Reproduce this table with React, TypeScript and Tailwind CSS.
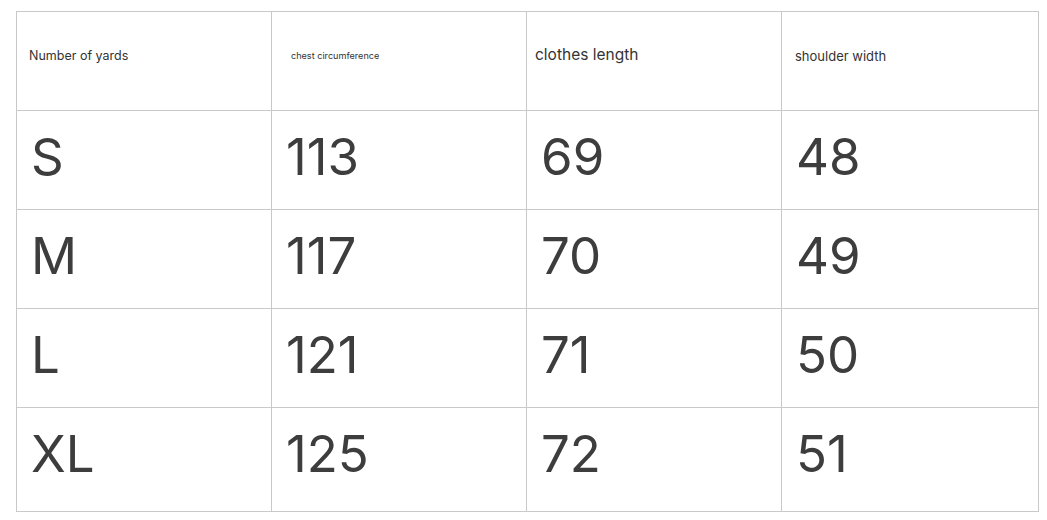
import React from "react";

const rows = [
  ["S", "113", "69", "48"],
  ["M", "117", "70", "49"],
  ["L", "121", "71", "50"],
  ["XL", "125", "72", "51"],
];

export default function App() {
  return (
    <div className="w-[1047px] h-[520px] bg-white pl-[16px] pt-[11px]">
      <div className="grid grid-cols-[255px_255px_255px_257px] grid-rows-[99px_99px_99px_99px_104px] w-[1023px] border-l border-t border-[#c9c9c9]">
        <div className="border-r border-b border-[#c9c9c9] flex items-center pl-[12px] pb-[10px] text-[12.5px] text-[#333] [font-family:Inter,'Noto_Sans',sans-serif]">
          Number of yards
        </div>
        <div className="border-r border-b border-[#c9c9c9] flex items-center pl-[19px] pb-[10px] text-[9.1px] text-[#333] [font-family:Inter,'Noto_Sans',sans-serif]">
          chest circumference
        </div>
        <div className="border-r border-b border-[#c9c9c9] flex items-center pl-[8px] pb-[12px] text-[15.5px] text-[#333] [font-family:Inter,'Noto_Sans',sans-serif]">
          clothes length
        </div>
        <div className="border-r border-b border-[#c9c9c9] flex items-center pl-[13px] pb-[8px] text-[13px] text-[#333] [font-family:Inter,'Noto_Sans',sans-serif]">
          shoulder width
        </div>
        {rows.map((r, i) =>
          r.map((c, j) => (
            <div
              key={`${i}-${j}`}
              className="border-r border-b border-[#c9c9c9] pt-[20px] pl-[14px] text-[51px] leading-none text-[#3d3d3d] [font-family:Inter,'Noto_Sans',sans-serif]"
            >
              {c}
            </div>
          ))
        )}
      </div>
    </div>
  );
}
